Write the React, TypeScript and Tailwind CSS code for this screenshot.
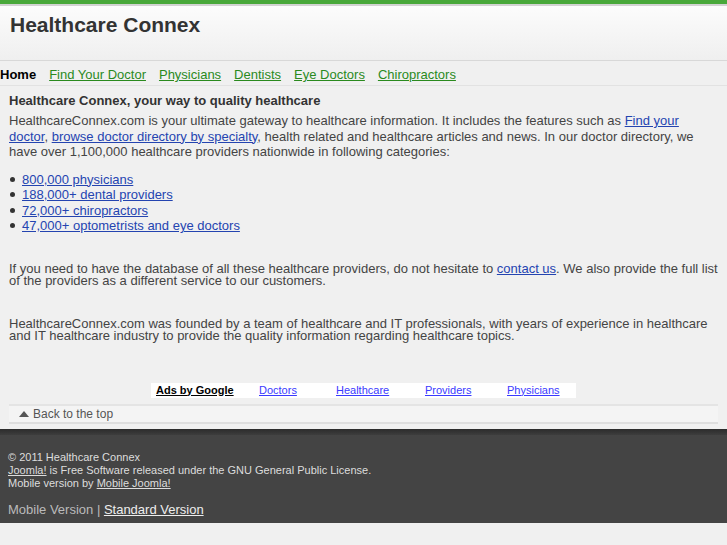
import React from "react";

const F = { fontFamily: '"Liberation Sans", Arial, Helvetica, sans-serif' };

export default function App() {
  return (
    <div className="min-h-[545px] w-full bg-[#f0f0f0] text-[#444]" style={F}>
      {/* top bar */}
      <div className="h-[4px] bg-[#48a83a]" />
      <div className="h-[2px] bg-[#d2d2d2]" />
      <div className="h-[55px] bg-gradient-to-b from-[#fcfcfc] to-[#efefef] px-[10px] pt-[7px] border-b border-[#d8d8d8]">
        <h1 className="m-0 text-[21px] font-bold leading-[24px] text-[#333]">Healthcare Connex</h1>
      </div>
      {/* nav */}
      <nav className="flex h-[25px] items-center gap-[13px] border-b border-[#e2e2e2] pt-[4px] text-[13px]">
        <span className="font-bold text-black">Home</span>
        {["Find Your Doctor", "Physicians", "Dentists", "Eye Doctors", "Chiropractors"].map((t) => (
          <a key={t} href="#" className="text-[#2a8a1e] underline">{t}</a>
        ))}
      </nav>
      {/* content */}
      <main className="px-[9px] pt-[7px]">
        <h2 className="m-0 text-[13px] font-bold leading-[16px] text-[#333]">
          Healthcare Connex, your way to quality healthcare
        </h2>
        <p className="mt-[4px] text-[13px] leading-[15.5px] text-[#444]">
          HealthcareConnex.com is your ultimate gateway to healthcare information. It includes the features such as{" "}
          <a href="#" className="text-[#2444b0] underline">Find your doctor</a>,{" "}
          <a href="#" className="text-[#2444b0] underline">browse doctor directory by specialty</a>, health related and
          healthcare articles and news. In our doctor directory, we have over 1,100,000 healthcare providers nationwide
          in following categories:
        </p>
        <ul className="mt-[12px] text-[13px] leading-[15.5px]">
          {[
            "800,000 physicians",
            "188,000+ dental providers",
            "72,000+ chiropractors",
            "47,000+ optometrists and eye doctors",
          ].map((t) => (
            <li key={t} className="flex items-center">
              <span className="ml-[1px] mr-[7px] inline-block h-[5px] w-[5px] rounded-full bg-[#333]" />
              <a href="#" className="text-[#2444b0] underline">{t}</a>
            </li>
          ))}
        </ul>
        <p className="mt-[29px] text-[13px] leading-[12.5px] text-[#444]">
          If you need to have the database of all these healthcare providers, do not hesitate to{" "}
          <a href="#" className="text-[#2444b0] underline">contact us</a>. We also provide the full list of the
          providers as a different service to our customers.
        </p>
        <p className="mt-[30px] text-[13px] leading-[12.5px] text-[#444]">
          HealthcareConnex.com was founded by a team of healthcare and IT professionals, with years of experience in
          healthcare and IT healthcare industry to provide the quality information regarding healthcare topics.
        </p>
        {/* ads */}
        <div className="mt-[40px] flex justify-center">
          <div className="flex h-[15px] w-[425px] items-center bg-white text-[11px] leading-[13px]">
            <a href="#" className="ml-[5px] w-[103px] font-bold text-black underline">Ads by Google</a>
            <a href="#" className="w-[77px] text-[#3a3aff] underline">Doctors</a>
            <a href="#" className="w-[89px] text-[#3a3aff] underline">Healthcare</a>
            <a href="#" className="w-[82px] text-[#3a3aff] underline">Providers</a>
            <a href="#" className="text-[#3a3aff] underline">Physicians</a>
          </div>
        </div>
        {/* back to top */}
        <div className="mt-[6px] flex h-[20px] items-center border-t-2 border-b-2 border-t-[#e4e4e4] border-b-[#dedede] bg-[#f4f4f4] pl-[10px] text-[12px] text-[#555]">
          <span className="mr-[4px] inline-block h-0 w-0 border-x-[5px] border-b-[6px] border-x-transparent border-b-[#555]" />
          <span>Back to the top</span>
        </div>
      </main>
      {/* footer */}
      <footer className="mt-[5px] h-[94px] bg-[#444] text-[11px] text-[#ddd]">
        <div className="h-[6px] bg-gradient-to-b from-[#2c2c2c] to-[#3d3d3d]" />
        <div className="px-[8px] pt-[16px] leading-[13px]">
          <div>© 2011 Healthcare Connex</div>
          <div>
            <a href="#" className="underline">Joomla!</a> is Free Software released under the GNU General Public License.
          </div>
          <div>
            Mobile version by <a href="#" className="underline">Mobile Joomla!</a>
          </div>
          <div className="mt-[13px] text-[13px] leading-[13px]">
            <span className="text-[#bbb]">Mobile Version | </span>
            <a href="#" className="text-[#eee] underline">Standard Version</a>
          </div>
        </div>
      </footer>
    </div>
  );
}
